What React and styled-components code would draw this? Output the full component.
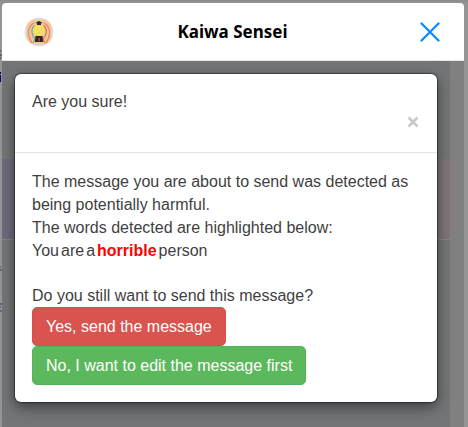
import React from "react";
import styled, { createGlobalStyle } from "styled-components";

const GlobalStyle = createGlobalStyle`
  *, *::before, *::after { box-sizing: border-box; }
  body {
    margin: 0;
    background: #929292;
    font-family: "Liberation Sans", Arial, sans-serif;
    font-size: 16px;
    line-height: 23px;
    color: #3f3f3f;
  }
`;

const Page = styled.div`
  display: grid;
  grid-template-columns: 2px minmax(0, 1fr) 4px;
  min-height: 100vh;
  padding-top: 3px;
  background: linear-gradient(#8c8c8c, #949494 3px);
`;

const PageEdge = styled.svg`
  display: block;
  width: 2px;
  height: 424px;
`;

const Panel = styled.section`
  display: flex;
  flex-direction: column;
  border-radius: 4px 4px 0 0;
  overflow: hidden;
`;

const PanelHeader = styled.header`
  display: grid;
  grid-template-columns: 32px 1fr 36px;
  align-items: center;
  height: 58px;
  padding: 0 18px 0 21px;
  background: #fff;
  border-bottom: 1px solid #e4e8e8;
`;

const Logo = styled.svg`
  width: 32px;
  height: 32px;
`;

const PanelTitle = styled.h1`
  margin: 0;
  font-family: "Noto Sans", "Open Sans", sans-serif;
  font-size: 17px;
  font-weight: 700;
  line-height: 24px;
  text-align: center;
  color: #000;
`;

const IconButton = styled.button`
  display: grid;
  place-items: center;
  justify-self: end;
  width: 32px;
  height: 32px;
  padding: 0;
  border: 0;
  background: none;
  cursor: pointer;
`;

const PanelBody = styled.div`
  flex: 1;
  display: grid;
  grid-template-columns: minmax(0, 1fr) 14px;
`;

const Backdrop = styled.div`
  grid-area: 1 / 1;
  display: grid;
  grid-template-rows: 98px 81px 1fr;
`;

const Band = styled.div`
  background: ${(p) =>
    p.$tinted ? "linear-gradient(90deg, #6d6c7c, #807477)" : "#737577"};
  border-bottom: 1px solid ${(p) => (p.$tinted ? "#858588" : "#737577")};
`;

const ScrollTrack = styled.div`
  grid-area: 1 / 2;
  background: #808080;
`;

const Dialog = styled.div`
  grid-area: 1 / 1;
  align-self: start;
  margin: 13px 13px 24px;
  border-radius: 6px;
  background: #fff;
  box-shadow: 0 0 1px 1px rgba(0, 0, 0, 0.4), 0 5px 14px rgba(0, 0, 0, 0.5);
`;

const DialogHeader = styled.div`
  display: flex;
  flex-direction: column;
  height: 79px;
  padding: 16px 16px 0 17px;
  border-bottom: 1px solid #e2e2e2;
`;

const DialogTitle = styled.h2`
  margin: 0;
  font-size: 16px;
  font-weight: 400;
  line-height: 23px;
`;

const DismissButton = styled.button`
  align-self: flex-end;
  display: grid;
  place-items: center;
  width: 16px;
  height: 18px;
  padding: 0;
  border: 0;
  background: none;
  cursor: pointer;
`;

const DialogBody = styled.div`
  padding: 17px;
`;

const Text = styled.p`
  margin: 0;
`;

const Quote = styled.p`
  display: flex;
  flex-wrap: wrap;
  gap: 0 2px;
  margin: 0 0 22px;
`;

const Harmful = styled.strong`
  color: #f00;
`;

const Actions = styled.div`
  display: flex;
  flex-direction: column;
  align-items: flex-start;
`;

const Button = styled.button`
  padding: 7px 13px;
  border: 1px solid ${(p) => (p.$danger ? "#d9504b" : "#55b355")};
  border-radius: 5px;
  background: ${(p) => (p.$danger ? "#d9534f" : "#5cb85c")};
  color: #fff;
  font: inherit;
  cursor: pointer;
`;

const words = ["You", "are", "a", "horrible", "person"];

export default function App() {
  return (
    <>
      <GlobalStyle />
      <Page>
        <PageEdge viewBox="0 0 2 424" aria-hidden="true">
          <path d="M0 48h1M0 52h2M0 55h1M0 264h1M0 267h2M0 301h2M0 304h1" stroke="#34345f" />
          <path d="M0 70h1M0 72v7" stroke="#000078" strokeWidth="2" />
          <path d="M0 308h2" stroke="#20406a" />
        </PageEdge>
        <Panel>
          <PanelHeader>
            <Logo viewBox="0 0 32 32" role="img" aria-label="Kaiwa Sensei logo">
              <defs>
                <clipPath id="logo-disc">
                  <circle cx="16" cy="16" r="14" />
                </clipPath>
              </defs>
              <circle cx="16" cy="16" r="14.3" fill="#dadada" />
              <g clipPath="url(#logo-disc)">
                <rect x="4" y="4" width="24" height="24" rx="6" fill="#f6c794" />
                <g fill="none" strokeWidth="1.2">
                  <path d="M11 7C4 11 4 19 9 27M21 7c7 4 7 12 2 20" stroke="#ec8268" />
                  <path d="M11.5 9.5C7 13 9 20 12 23l-2 4" stroke="#5fb0a8" />
                  <path d="M20.5 9.5c4.500 4 3 10-.5 13.500l2 4" stroke="#d96d5d" />
                </g>
                <circle cx="16" cy="14.2" r="5.7" fill="#f3e25e" />
                <path d="M14 14h1M18 14h1M15 16.500h2" stroke="#d3bd4c" strokeWidth=".6" />
                <path d="M12.500 6.700L16 5l3.500 1.700L16 8.500zM14 7h4v2h-4z" fill="#252b2d" />
                <path d="M12.500 20h7l.6 6h-8.200z" fill="#292829" />
                <path d="M15.300 22h1.600l-.3 3.500h-1z" fill="#d34845" />
              </g>
            </Logo>
            <PanelTitle>Kaiwa Sensei</PanelTitle>
            <IconButton type="button" aria-label="Close chat">
              <svg width="20" height="20" viewBox="0 0 20 20">
                <path d="M1.5 1.5l17 17M18.5 1.5l-17 17" stroke="#118cff" strokeWidth="2.4" strokeLinecap="round" />
              </svg>
            </IconButton>
          </PanelHeader>
          <PanelBody>
            <Backdrop>
              <Band />
              <Band $tinted />
              <Band />
            </Backdrop>
            <ScrollTrack />
            <Dialog role="dialog" aria-labelledby="dialog-title">
              <DialogHeader>
                <DialogTitle id="dialog-title">Are you sure!</DialogTitle>
                <DismissButton type="button" aria-label="Dismiss">
                  <svg width="12" height="12" viewBox="0 0 12 12">
                    <path d="M1.5 1.5l9 9M10.5 1.5l-9 9" stroke="#c8c8c8" strokeWidth="2.6" />
                  </svg>
                </DismissButton>
              </DialogHeader>
              <DialogBody>
                <Text>The message you are about to send was detected as being potentially harmful.</Text>
                <Text>The words detected are highlighted below:</Text>
                <Quote>
                  {words.map((word) =>
                    word === "horrible" ? (
                      <Harmful key={word}>{word}</Harmful>
                    ) : (
                      <span key={word}>{word}</span>
                    )
                  )}
                </Quote>
                <Text>Do you still want to send this message?</Text>
                <Actions>
                  <Button type="button" $danger>Yes, send the message</Button>
                  <Button type="button">No, I want to edit the message first</Button>
                </Actions>
              </DialogBody>
            </Dialog>
          </PanelBody>
        </Panel>
      </Page>
    </>
  );
}
